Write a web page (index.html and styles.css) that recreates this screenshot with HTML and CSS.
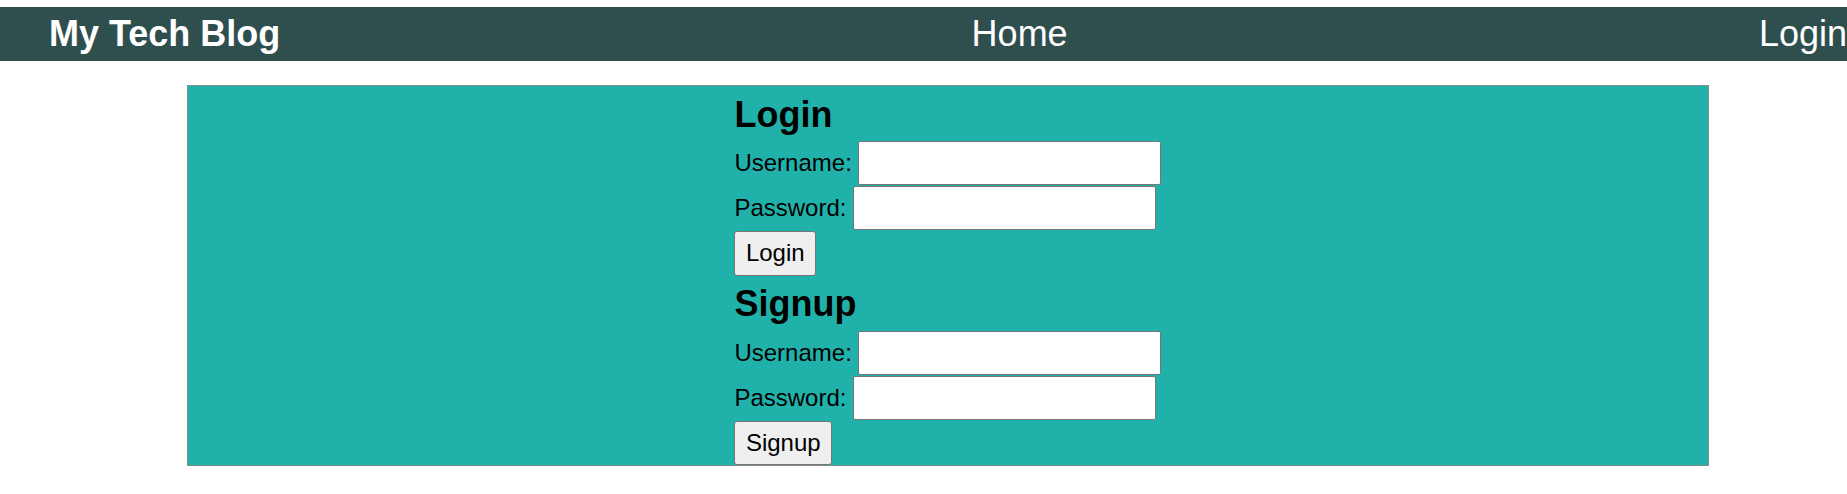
FILE: index.html
```html
<!DOCTYPE html>
<html lang="en">
<head>
<meta charset="utf-8">
<title>My Tech Blog</title>
<link rel="stylesheet" href="styles.css">
</head>
<body>
<header class="site-header">
  <a class="brand" href="#">My Tech Blog</a>
  <a class="nav-link" href="#">Home</a>
  <a class="nav-link" href="#">Login</a>
</header>
<main class="panel">
  <div class="forms">
    <form class="auth-form">
      <h2 class="form-title">Login</h2>
      <div class="field"><label for="lu">Username:</label><input id="lu" type="text"></div>
      <div class="field"><label for="lp">Password:</label><input id="lp" type="password"></div>
      <button type="button" class="btn">Login</button>
    </form>
    <form class="auth-form">
      <h2 class="form-title">Signup</h2>
      <div class="field"><label for="su">Username:</label><input id="su" type="text"></div>
      <div class="field"><label for="sp">Password:</label><input id="sp" type="password"></div>
      <button type="button" class="btn">Signup</button>
    </form>
  </div>
</main>
</body>
</html>
```
FILE: styles.css
```css
html, body {
  margin: 0;
  padding: 0;
  background: #ffffff;
  overflow: hidden;
}
body {
  padding-top: 7px;
  font-family: "Liberation Sans", Arial, sans-serif;
  color: #000;
}
.site-header {
  display: flex;
  justify-content: space-between;
  align-items: center;
  height: 54px;
  box-sizing: border-box;
  padding: 0 0 0 49px;
  background: #2f4f4f;
}
.site-header a {
  color: #ffffff;
  text-decoration: none;
  font-size: 36px;
}
.site-header .brand {
  font-weight: bold;
}
.panel {
  display: flex;
  justify-content: center;
  margin: 24px 0 0 10.125%;
  width: 82.4%;
  box-sizing: border-box;
  background: #20b2aa;
  border: 1px solid #7f8f8e;
}
.forms {
  display: flex;
  flex-direction: column;
}
.auth-form {
  display: flex;
  flex-direction: column;
  align-items: flex-start;
  margin: 0;
}
.form-title {
  font-size: 36px;
  font-weight: bold;
  margin: 7.5px 0 5.5px;
}
.field {
  display: flex;
  align-items: center;
  gap: 6.7px;
  font-size: 24px;
  margin-bottom: 1px;
}
.field input {
  width: 303px;
  height: 44px;
  box-sizing: border-box;
  border: 1px solid #767676;
  border-radius: 2px;
  background: #fff;
  padding: 2px 4px;
  margin: 0;
  font-size: 24px;
}
.btn {
  height: 44.5px;
  box-sizing: border-box;
  padding: 0 10.5px;
  margin: 0;
  font-family: "Liberation Sans", Arial, sans-serif;
  font-size: 24px;
  color: #000;
  background: #efefef;
  border: 1px solid #767676;
  border-radius: 3px;
}
```
